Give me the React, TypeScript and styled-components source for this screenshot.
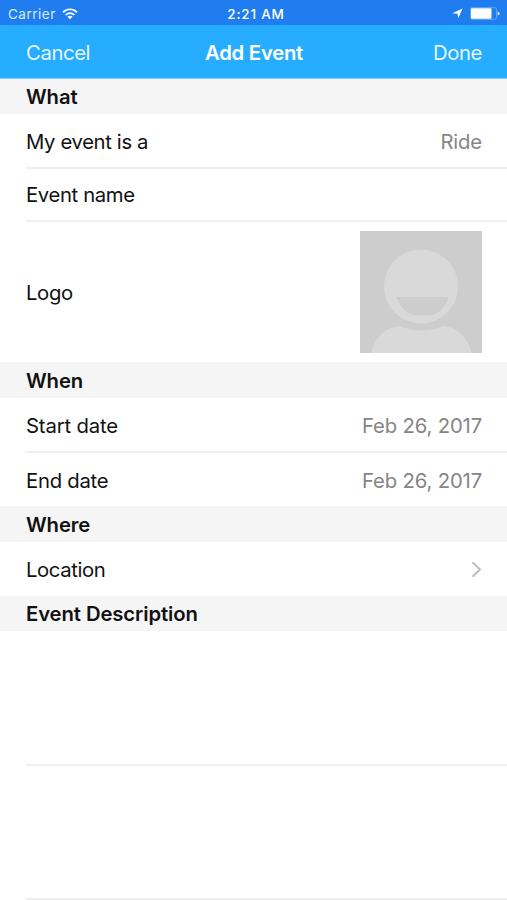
import React from 'react';
import styled, { createGlobalStyle } from 'styled-components';

const GlobalStyle = createGlobalStyle`
  * { box-sizing: border-box; }
  body {
    margin: 0;
    background: #fff;
    font-family: Inter, "Liberation Sans", sans-serif;
    color: #111;
    -webkit-font-smoothing: antialiased;
  }
`;

const Screen = styled.main`
  width: 507px;
  height: 900px;
  overflow: hidden;
  display: flex;
  flex-direction: column;
  background: #fff;
  font-size: 20.3px;
  line-height: 24px;
`;

const StatusBar = styled.header`
  flex: none;
  height: 25px;
  padding: 2px 7px 0 8px;
  display: grid;
  grid-template-columns: 1fr auto 1fr;
  align-items: center;
  background: #207df0;
  color: #fff;
  font-size: 13.5px;
  line-height: 17px;
`;

const Carrier = styled.div`
  display: flex;
  align-items: center;
  gap: 6px;
  color: #d9eaff;
  letter-spacing: 0.5px;
`;

const CarrierName = styled.span`
  padding-top: 2px;
`;

const Clock = styled.div`
  padding: 2px 0 0 4px;
  font-weight: 500;
  letter-spacing: 0.8px;
`;

const Indicators = styled.div`
  display: flex;
  justify-content: flex-end;
  align-items: center;
  gap: 7px;
`;

const NavBar = styled.nav`
  flex: none;
  height: 54px;
  padding: 2px 25px 0 26px;
  display: grid;
  grid-template-columns: 1fr auto 1fr;
  align-items: center;
  background: #27adff;
  border-bottom: 1px solid #7dcfff;
  color: #fff;
`;

const NavButton = styled.button<{ $end?: boolean }>`
  justify-self: ${(p) => (p.$end ? 'end' : 'start')};
  padding: 0;
  border: 0;
  background: none;
  font: inherit;
  color: #e6f6ff;
  letter-spacing: -0.4px;
`;

const Title = styled.h1`
  margin: 0;
  font-size: 20.3px;
  font-weight: 600;
  letter-spacing: -0.25px;
`;

const SectionHeader = styled.h2<{ $height: number; $drop?: number }>`
  flex: none;
  margin: 0;
  height: ${(p) => p.$height}px;
  padding: ${(p) => p.$drop ?? 0}px 26px 0;
  display: flex;
  align-items: center;
  background: #f5f5f5;
  font-size: 20.3px;
  font-weight: 600;
  letter-spacing: -0.1px;
`;

const Row = styled.div<{ $height: number; $divided?: boolean; $drop?: number }>`
  flex: none;
  height: ${(p) => p.$height}px;
  margin-left: 26px;
  padding-right: 25px;
  padding-top: ${(p) => p.$drop ?? 0}px;
  display: flex;
  align-items: center;
  justify-content: space-between;
  border-bottom: ${(p) => (p.$divided ? '2px solid #efefef' : '0')};
`;

const Label = styled.span<{ $spacing?: number; $drop?: number }>`
  padding-top: ${(p) => p.$drop ?? 0}px;
  letter-spacing: ${(p) => p.$spacing ?? -0.36}px;
`;

const Value = styled.span`
  color: #858585;
  letter-spacing: -0.15px;
`;

const WifiIcon = () => (
  <svg width="16" height="12" viewBox="0 0 16 12" fill="none" stroke="#fff" strokeWidth="1.7">
    <path d="M1 4.3C5 .2 11 .2 15 4.3" />
    <path d="M3.6 7C6.2 4.4 9.8 4.4 12.4 7" />
    <path d="M8 11.2 5.5 8.7C6.9 7.3 9.1 7.3 10.5 8.7Z" fill="#fff" stroke="none" />
  </svg>
);

const LocationIcon = () => (
  <svg width="11" height="11" viewBox="0 0 11 11" fill="#fff">
    <path d="M10.5.5 6.2 10.4 5.6 5.7.4 5.2Z" />
  </svg>
);

const BatteryIcon = () => (
  <svg width="30" height="13" viewBox="0 0 30 13">
    <rect x=".6" y=".6" width="26" height="11.8" rx="1.8" fill="none" stroke="#5fa5f8" />
    <rect x="1" y="1.2" width="20.5" height="10.6" rx=".8" fill="#fff" />
    <path d="M27.6 4.4Q29.8 4.8 29.8 6.5T27.6 8.6Z" fill="#d2e7ff" />
  </svg>
);

const Avatar = () => (
  <svg width="122" height="122" viewBox="0 0 122 122">
    <rect width="122" height="122" fill="#cdcdcd" />
    <circle cx="61" cy="55.5" r="37" fill="#d9d9d9" />
    <path d="M36.5 66H89C84 79 76 84.5 68 84.5H57C49 84.5 41 78 36.5 66Z" fill="#cdcdcd" />
    <path d="M10.5 122C16 105 26 96 40 95Q61 104 84 95C98 97 107 106 112 122Z" fill="#d9d9d9" />
  </svg>
);

const Chevron = () => (
  <svg width="11" height="17" viewBox="0 0 11 17" fill="none" stroke="#bdbdbd" strokeWidth="2">
    <path d="M1.5 1.2 9 8.5 1.5 15.8" />
  </svg>
);

export default function App() {
  return (
    <Screen>
      <GlobalStyle />
      <StatusBar>
        <Carrier><CarrierName>Carrier</CarrierName><WifiIcon /></Carrier>
        <Clock>2:21 AM</Clock>
        <Indicators><LocationIcon /><BatteryIcon /></Indicators>
      </StatusBar>
      <NavBar>
        <NavButton>Cancel</NavButton>
        <Title>Add Event</Title>
        <NavButton $end>Done</NavButton>
      </NavBar>

      <SectionHeader $height={35}>What</SectionHeader>
      <Row $height={55} $divided $drop={2}><Label>My event is a</Label><Value>Ride</Value></Row>
      <Row $height={53} $divided><Label>Event name</Label></Row>
      <Row $height={140}><Label $drop={2}>Logo</Label><Avatar /></Row>

      <SectionHeader $height={36} $drop={2}>When</SectionHeader>
      <Row $height={55} $divided $drop={2}><Label $spacing={-0.15}>Start date</Label><Value>Feb 26, 2017</Value></Row>
      <Row $height={53} $drop={2}><Label $spacing={-0.25}>End date</Label><Value>Feb 26, 2017</Value></Row>

      <SectionHeader $height={36} $drop={2}>Where</SectionHeader>
      <Row $height={54}><Label $spacing={-0.4} $drop={2}>Location</Label><Chevron /></Row>

      <SectionHeader $height={35}>Event Description</SectionHeader>
      <Row $height={135} $divided />
      <Row $height={134} $divided />
    </Screen>
  );
}
